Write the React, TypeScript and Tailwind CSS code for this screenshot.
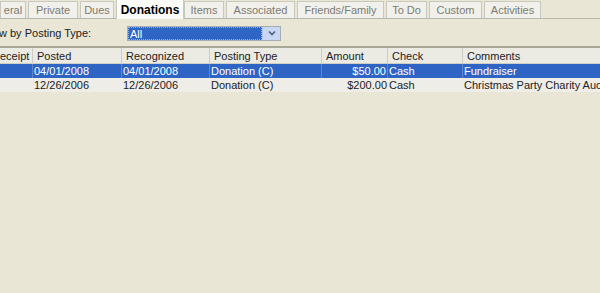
import React from "react";

const tabs = [
  { label: "eral", w: 26 },
  { label: "Private", w: 50 },
  { label: "Dues", w: 34 },
  { label: "Donations", w: 68, active: true },
  { label: "Items", w: 40 },
  { label: "Associated", w: 69 },
  { label: "Friends/Family", w: 87 },
  { label: "To Do", w: 41 },
  { label: "Custom", w: 53 },
  { label: "Activities", w: 57 },
];

const cols = [
  { label: "eceipt", w: 33 },
  { label: "Posted", w: 89 },
  { label: "Recognized", w: 88 },
  { label: "Posting Type", w: 112 },
  { label: "Amount", w: 66 },
  { label: "Check", w: 75 },
  { label: "Comments", w: 160 },
];

const rows = [
  { cells: ["", "04/01/2008", "04/01/2008", "Donation (C)", "$50.00", "Cash", "Fundraiser"], selected: true },
  { cells: ["", "12/26/2006", "12/26/2006", "Donation (C)", "$200.00", "Cash", "Christmas Party Charity Auction"], selected: false },
];

export default function App() {
  return (
    <div
      className="w-[600px] h-[293px] overflow-hidden bg-[#e9e6d5] text-[11px] text-black"
      style={{ fontFamily: '"Liberation Sans", Arial, sans-serif' }}
    >
      {/* tab strip */}
      <div className="flex h-[19px] items-end border-b border-[#b9b8ae]">
        {tabs.map((t) =>
          t.active ? (
            <div
              key={t.label}
              style={{ width: t.w }}
              className="h-[19px] -mb-px flex items-center justify-center bg-[#fbfbf8] font-bold text-[12px] border-x border-[#c8c7bd]"
            >
              {t.label}
            </div>
          ) : (
            <div
              key={t.label}
              style={{ width: t.w }}
              className="h-[17px] mr-[2px] flex items-center justify-center bg-[#f1f0ea] text-[#7c7c74] border border-b-0 border-[#c9c8be] whitespace-nowrap overflow-hidden"
            >
              {t.label}
            </div>
          )
        )}
      </div>

      {/* filter row */}
      <div className="flex items-center h-[27px] pt-[1px]">
        <span className="w-[128px] text-[#222] whitespace-nowrap -ml-[1px]">w by Posting Type:</span>
        <div className="flex items-center w-[154px] h-[15px] bg-white border border-[#a5acb5]">
          <div className="flex-1 h-full bg-[#2f66c6] text-white leading-[13px] pl-[1px] border border-dotted border-[#9fb4da]">All</div>
          <div className="w-[18px] h-full flex items-center justify-center bg-[#c9d7f2] border-l border-[#b3c4e6]">
            <svg width="8" height="6" viewBox="0 0 8 6">
              <path d="M1 1.5 L4 4.5 L7 1.5" fill="none" stroke="#4d6185" strokeWidth="1.6" />
            </svg>
          </div>
        </div>
      </div>

      {/* grid */}
      <div className="border-t-2 border-[#a9a796]">
        <div className="flex h-[16px] bg-[#ecebe3] border-b border-[#d0cfc4]">
          {cols.map((c, j) => (
            <div
              key={c.label}
              style={{ width: c.w }}
              className={`shrink-0 ${j === 0 ? "pl-0" : "pl-[4px]"} leading-[16px] text-[#222] border-r border-[#cfcdc2] whitespace-nowrap overflow-hidden`}
            >
              {c.label}
            </div>
          ))}
        </div>
        {rows.map((r, i) => (
          <div
            key={i}
            className={`flex h-[14px] ${r.selected ? "bg-[#2e65c4] text-white" : "bg-[#eeede8] text-[#222]"}`}
          >
            {r.cells.map((cell, j) => (
              <div
                key={j}
                style={{ width: cols[j].w }}
                className={`shrink-0 leading-[14px] whitespace-nowrap overflow-hidden ${j === 4 ? "text-right pr-[1px]" : "pl-[1px]"} ${
                  r.selected ? "border-r border-[#5f86cf]" : ""
                }`}
              >
                {cell}
              </div>
            ))}
          </div>
        ))}
      </div>
    </div>
  );
}
